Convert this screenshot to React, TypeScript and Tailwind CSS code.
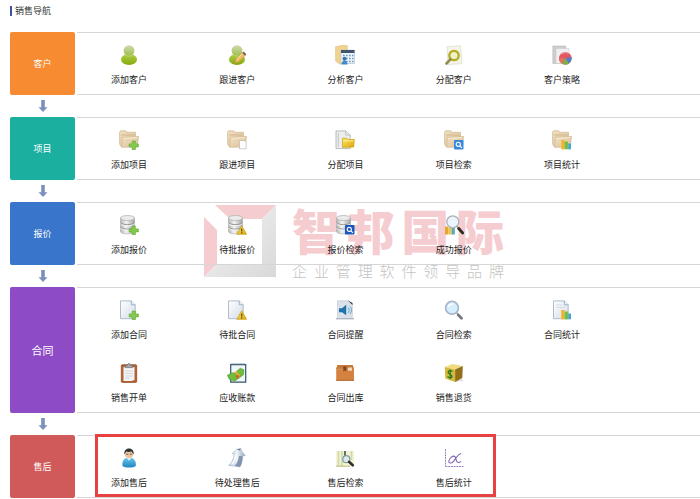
import type { ReactNode } from "react";
import clsx from "clsx";

type NavItem = { label: string; icon: ReactNode };

type Stage = {
    name: string;
    color: string;
    large?: boolean;
    highlighted?: boolean;
    items: NavItem[];
};

function Icon({ children }: { children: ReactNode }) {
    return (
        <svg viewBox="0 0 20 20" className="size-5" aria-hidden="true">
            {children}
        </svg>
    );
}

// Gradients shared by every icon on the page
function IconDefs() {
    return (
        <svg className="absolute size-0" aria-hidden="true">
            <defs>
                <linearGradient id="head" x2="0" y2="1">
                    <stop offset="0" stopColor="#cfdcae" />
                    <stop offset="1" stopColor="#9fbd4c" />
                </linearGradient>
                <linearGradient id="body" x2="0" y2="1">
                    <stop offset="0" stopColor="#b3cf4a" />
                    <stop offset="1" stopColor="#84a90c" />
                </linearGradient>
                <linearGradient id="folder" x2="1" y2="1">
                    <stop offset="0" stopColor="#f1dfc0" />
                    <stop offset="1" stopColor="#dcc299" />
                </linearGradient>
                <linearGradient id="paper" x2="1" y2="1">
                    <stop offset="0" stopColor="#ffffff" />
                    <stop offset="1" stopColor="#d3dce6" />
                </linearGradient>
                <linearGradient id="disk">
                    <stop offset="0" stopColor="#b4b4b4" />
                    <stop offset="0.4" stopColor="#f4f4f4" />
                    <stop offset="1" stopColor="#a2a2a2" />
                </linearGradient>
                <linearGradient id="gold" x2="1" y2="1">
                    <stop offset="0" stopColor="#fbe667" />
                    <stop offset="1" stopColor="#dda60c" />
                </linearGradient>
                <linearGradient id="shirt" x2="0" y2="1">
                    <stop offset="0" stopColor="#6cc8ec" />
                    <stop offset="1" stopColor="#1f86bf" />
                </linearGradient>
                <linearGradient id="slate" x2="1" y2="0">
                    <stop offset="0" stopColor="#9fb2ca" />
                    <stop offset="0.5" stopColor="#f1f5fa" />
                    <stop offset="1" stopColor="#8a9db8" />
                </linearGradient>
                <linearGradient id="frame" x2="1" y2="1">
                    <stop offset="0" stopColor="#f4f4f4" />
                    <stop offset="1" stopColor="#d9d9d9" />
                </linearGradient>
            </defs>
        </svg>
    );
}

function Person() {
    return (
        <>
            <ellipse cx="10" cy="14.4" rx="8" ry="5.600" fill="url(#body)" />
            <circle cx="10" cy="5.6" r="5.4" fill="url(#head)" />
            <path d="M5.5 9.800c2.5 1.700 6.500 1.700 9 0" fill="none" stroke="#c9dc84" strokeWidth="0.600" />
        </>
    );
}

function Folder() {
    return (
        <>
            <path d="M.6 2.200 1.500.8h5.200l1.200 1.500h8.600v12L2 16.500.6 14z" fill="url(#folder)" stroke="#cfb68f" strokeWidth=".7" />
            <path d="M2.400 5h13.300" stroke="#d0b58c" />
            <path d="M3.200 7.400 19.500 6.500l-1.300 10.400-15.600.4z" fill="url(#folder)" stroke="#cfb68f" strokeWidth=".7" />
            <path d="m4 8.400 14-.8" stroke="#f9edd5" />
        </>
    );
}

function Database() {
    return (
        <>
            <path d="M1.500 3v13.500c0 3.200 14 3.200 14 0V3z" fill="url(#disk)" stroke="#a8a8a8" strokeWidth=".6" />
            <ellipse cx="8.500" cy="3" rx="7" ry="2.500" fill="#ececec" stroke="#adadad" strokeWidth=".7" />
            <path d="M1.500 7.500c1 2.800 13 2.800 14 0M1.500 12c1 2.800 13 2.800 14 0" fill="none" stroke="#979797" />
            <path d="M1.500 8.600c1 2.800 13 2.800 14 0M1.500 13.100c1 2.800 13 2.800 14 0" fill="none" stroke="#f7f7f7" strokeWidth=".8" />
        </>
    );
}

function Page() {
    return (
        <>
            <path d="M1.500.9h10.800l3.900 3.900v13.900H1.500z" fill="url(#paper)" stroke="#a5b6c8" strokeWidth=".9" />
            <path d="M12.300.9v3.900h3.900" fill="#e9f1f8" stroke="#8aa3bc" strokeWidth=".8" />
        </>
    );
}

function PlusBadge() {
    return <path d="M13.200 11h3.200v2.900h3v3h-3v2.800h-3.200v-2.800h-3v-3h3z" fill="#84ca4d" stroke="#5eaa2d" strokeWidth=".6" />;
}

function WarningBadge() {
    return (
        <>
            <path d="M14.700 10.800 19.600 19.300H9.800z" fill="url(#gold)" stroke="#cf9c10" strokeWidth=".7" strokeLinejoin="round" />
            <path d="M14.700 13.400v3M14.700 17.200v1.200" stroke="#5f4700" strokeWidth="1.200" />
        </>
    );
}

function SearchBadge({ fill }: { fill: string }) {
    return (
        <>
            <rect x="10" y="10" width="9.500" height="9.500" rx=".8" fill={fill} />
            <circle cx="14.300" cy="14.300" r="2.100" fill="none" stroke="#fff" strokeWidth="1.100" />
            <path d="m15.900 15.900 2 2" stroke="#fff" strokeWidth="1.100" />
        </>
    );
}

function BarsBadge() {
    return (
        <>
            <path d="M9 10h3.500v9.300H9z" fill="#f0b22f" />
            <path d="M12.500 11.500h3.300v7.800h-3.300z" fill="#6fba35" />
            <path d="M15.800 13.500h3.200v5.800h-3.200z" fill="#47a5c8" />
            <path d="M9.500 10v9.300M13 11.500v7.800M16.300 13.500v5.800" stroke="#fff" strokeOpacity=".3" strokeWidth=".6" />
        </>
    );
}

const stages: Stage[] = [
    {
        name: "客户",
        color: "bg-[#f68b32]",
        items: [
            { label: "添加客户", icon: <Person /> },
            {
                label: "跟进客户",
                icon: (
                    <>
                        <Person />
                        <path d="m8 18 1-4.200 6.800-6.200 2.600 2.600-6.700 6.600z" fill="#f1bf66" stroke="#c28a3b" strokeWidth=".6" />
                        <path d="m15.200 8 1.400-1.500 2.800 2.700-1.400 1.500z" fill="#7c6555" />
                        <path d="m9.600 14 6-5.400" stroke="#fbe3a3" />
                    </>
                ),
            },
            {
                label: "分析客户",
                icon: (
                    <>
                        <path d="M.6 1.500h3L4.500.6h7.800v15.800L5 19.300.6 16z" fill="#f1d391" stroke="#dbb56b" strokeWidth=".5" />
                        <path d="M6 5.200h13.500v13.300H6z" fill="#eef4fa" stroke="#a8b8c9" strokeWidth=".6" />
                        <path d="M6 5h13.500v3H6z" fill="#40546f" />
                        <path d="M8 10.500h10.500M8 13.500h10.500M8 16.500h10.500" stroke="#6a99c4" strokeWidth="1.300" strokeDasharray="1.700 1.300" />
                        <circle cx="9.500" cy="13.700" r="2" fill="#3872ad" />
                        <path d="M6.500 19.500c0-5 6-5 6 0z" fill="#3f88c9" />
                    </>
                ),
            },
            {
                label: "分配客户",
                icon: (
                    <>
                        <path d="M3 1.500 16.500.7l1.500 18L4 19.500z" fill="#f4f3e8" stroke="#deddcd" strokeWidth=".7" />
                        <circle cx="10" cy="10.500" r="4.700" fill="#edf2c7" stroke="#b4ac27" strokeWidth="2.300" />
                        <path d="m6.500 14.200-4 4.300" stroke="#918c4e" strokeWidth="2.600" strokeLinecap="round" />
                    </>
                ),
            },
            {
                label: "客户策略",
                icon: (
                    <>
                        <path d="M.8 1h13v17.500H.8z" fill="#ceccce" stroke="#bcbabc" strokeWidth=".6" />
                        <path d="M4 3.500h13v15H4z" fill="#f0eff1" stroke="#cbc9cc" strokeWidth=".6" />
                        <circle cx="13.300" cy="13.300" r="6.300" fill="#e35760" />
                        <path d="M13.300 13.300 19.500 12a6.300 6.300 0 0 1-2.500 6.400z" fill="#507fc8" />
                        <path d="m13.300 13.300 3.700 5.100a6.300 6.300 0 0 1-6.700.4z" fill="#74b44c" />
                        <path d="m13.300 13.300-3 5.500A6.300 6.300 0 0 1 7 13.500z" fill="#e0765a" />
                        <path d="M9.500 9.400c2-2.200 5-2.300 7-.8" fill="none" stroke="#f29b9f" />
                    </>
                ),
            },
        ],
    },
    {
        name: "项目",
        color: "bg-[#1aaf9f]",
        items: [
            { label: "添加项目", icon: <><Folder /><PlusBadge /></> },
            {
                label: "跟进项目",
                icon: (
                    <>
                        <Folder />
                        <path d="M12.500 10.500h4.700l2 2v6.300h-6.700z" fill="#fdfdfd" stroke="#bdb8b0" strokeWidth=".7" />
                    </>
                ),
            },
            {
                label: "分配项目",
                icon: (
                    <>
                        <path d="M1 .9h9.500l4.700 4.200v13.500H1z" fill="#eceeed" stroke="#a9adab" strokeWidth=".8" />
                        <path d="M10.500.9v4.200h4.700M3.300 3v14" fill="none" stroke="#b9bdbb" strokeWidth=".8" />
                        <path d="M7.500 8.300h4.300l1.200 1.200h6.300l-.6 7.500-11.200.4z" fill="url(#gold)" stroke="#cfa20b" strokeWidth=".7" />
                        <path d="M8.300 10.900h10" stroke="#fff0a0" />
                    </>
                ),
            },
            { label: "项目检索", icon: <><Folder /><SearchBadge fill="#3888dc" /></> },
            { label: "项目统计", icon: <><Folder /><BarsBadge /></> },
        ],
    },
    {
        name: "报价",
        color: "bg-[#3875cb]",
        items: [
            { label: "添加报价", icon: <><Database /><PlusBadge /></> },
            { label: "待批报价", icon: <><Database /><WarningBadge /></> },
            { label: "报价检索", icon: <><Database /><SearchBadge fill="#1c57bd" /></> },
            {
                label: "成功报价",
                icon: (
                    <>
                        <path d="M1 11.500h3.300v8H1z" fill="#e7a62c" />
                        <path d="M4.300 12.500h3.300v7H4.300z" fill="#f0c24a" />
                        <path d="M7.600 13h3.200v6.500H7.600z" fill="#51aabf" />
                        <circle cx="8.800" cy="6.800" r="6" fill="#e8f2f9" fillOpacity=".85" stroke="#a9b1b8" strokeWidth="1.300" />
                        <path d="m13 11.300 2 2" stroke="#999" strokeWidth="1.500" />
                        <path d="m14.700 13.500 4 4.500" stroke="#302b2a" strokeWidth="2.800" strokeLinecap="round" />
                    </>
                ),
            },
        ],
    },
    {
        name: "合同",
        color: "bg-[#8d4bc5]",
        large: true,
        items: [
            { label: "添加合同", icon: <><Page /><PlusBadge /></> },
            { label: "待批合同", icon: <><Page /><WarningBadge /></> },
            {
                label: "合同提醒",
                icon: (
                    <>
                        <path d="M2.500.8h11l3.800 3.700v14H2.500z" fill="#dbe1e8" stroke="#bac4cf" strokeWidth=".6" />
                        <path d="M13 .5 17.500 5v-2z" fill="#2a3038" />
                        <path d="M1 18.700h18" stroke="#aeb8c5" strokeWidth="1.400" />
                        <path d="M4 8.300h3l4.200-3.500v10.500L7 12.200H4z" fill="#1d74ad" />
                        <path d="M13 7.500c1.500 1.700 1.500 3.700 0 5.400M15 6.500c2 2.300 2 5.100 0 7.400" fill="none" stroke="#58a7cc" />
                    </>
                ),
            },
            {
                label: "合同检索",
                icon: (
                    <>
                        <circle cx="8" cy="7.800" r="6.400" fill="#d7eefb" stroke="#a7b7cc" strokeWidth="1.700" />
                        <path d="M4.500 7c.4-2.500 2.500-3.600 5-3" fill="none" stroke="#fff" strokeWidth="1.300" />
                        <path d="m12.700 12.900 2 2" stroke="#a6a6aa" strokeWidth="1.600" />
                        <path d="m14.300 15 3.200 3.200" stroke="#78777d" strokeWidth="2.800" strokeLinecap="round" />
                    </>
                ),
            },
            { label: "合同统计", icon: <><Page /><path d="M4 5h6M4 7.500h9" stroke="#d4dce5" /><BarsBadge /></> },
            {
                label: "销售开单",
                icon: (
                    <>
                        <rect x="2.300" y="1.700" width="15.400" height="17.700" rx="1" fill="#b76030" stroke="#8c4220" strokeWidth=".7" />
                        <path d="M4.500 4h11v13l-3 1H4.500z" fill="#f3f4f6" />
                        <path d="M6.300 8h7.400M6.300 10.500h7.400M6.300 13h7.400M6.300 15.300h4" stroke="#c8cdd3" strokeWidth=".8" />
                        <path d="M6 4.600V2.500h2.300C8.500-.1 11.500-.1 11.700 2.500H14v2.100z" fill="#a3a8ac" stroke="#686c70" strokeWidth=".7" />
                    </>
                ),
            },
            {
                label: "应收账款",
                icon: (
                    <>
                        <path d="M3.700 1.700h15v17.400h-15z" fill="#f2f7fa" stroke="#345468" strokeWidth="1.200" />
                        <path d="M4.500 1.200h14" stroke="#617f91" strokeWidth="1.800" strokeDasharray="1 1" />
                        <path d="m.4 12.300 4.500-2.500 2.500.5 5.800-5.100 3.700 1.600-.4 5-8.600 6.300-5.600-1.800z" fill="#6fbe3b" stroke="#4b962d" strokeWidth=".6" />
                        <path d="m6 9.500 3 1 2 4 2-2-3-4z" fill="#ecad36" />
                        <path d="m8.500 13 2.500-1.500 1 2.500-2 1.700z" fill="#d9582f" />
                    </>
                ),
            },
            {
                label: "合同出库",
                icon: (
                    <>
                        <path d="M2.500 2h15l1.500 4v11.500H1.200V6z" fill="#d58240" />
                        <path d="M2.500 2h15l1.500 4H1.200z" fill="#c57838" />
                        <path d="M1.200 6.200H19" stroke="#dd955a" strokeWidth=".8" />
                        <path d="M8.300 3.500h3v5l-1.500-1-1.500 1z" fill="#754723" />
                        <path d="M13 4.500h4v3.200h-4z" fill="#f0d8bd" />
                        <path d="M1.200 17.300H19" stroke="#b2632c" />
                    </>
                ),
            },
            {
                label: "销售退货",
                icon: (
                    <>
                        <path d="m11 17.800 7-1.500 2 1.200-8 1.500z" fill="#ddd" />
                        <path d="m.8 4 7.700-3 10.300 2-7.700 3.500z" fill="#f0dc80" />
                        <path d="m.8 4 10.300 2.500V19L1.300 15.500z" fill="#d7b83a" />
                        <path d="m11.100 6.500 7.700-3.500-.5 12L11.100 19z" fill="#927019" />
                        <path d="M8.500 8.600C5.800 6.500 3.300 8.300 4.500 10.200c.8 1.200 3.800 1.400 3.600 3.500-.2 1.700-3 1.600-4.600-.3M6.200 6.500v9.800" fill="none" stroke="#287b20" strokeWidth="1.300" />
                    </>
                ),
            },
        ],
    },
    {
        name: "售后",
        color: "bg-[#d05a5a]",
        highlighted: true,
        items: [
            {
                label: "添加售后",
                icon: (
                    <>
                        <path d="M3.500 18C2.800 12.500 5.500 9.500 10 9.500s7.500 3 6.800 8.500c-2.500 2-10.800 2-13.300 0z" fill="url(#shirt)" />
                        <path d="m7.500 9.700 2.500 3 2.500-3z" fill="#e9f7fd" />
                        <circle cx="10" cy="5.900" r="4.300" fill="#eec5a0" />
                        <path d="M5.400 6.300C4.300-1.400 15.700-1.400 14.600 6.300c-1-.5-1.200-2.200-2.200-2.800-2 .6-4.200.4-5.300 0-.7 1-.8 2.300-1.700 2.800z" fill="#2e3134" />
                        <path d="M7.300 6.200h2M10.900 6.200h2" stroke="#55443a" strokeWidth=".8" />
                    </>
                ),
            },
            {
                label: "待处理售后",
                icon: (
                    <>
                        <path d="M5 5.500 9.500 1.300l4.500-.8 1.200 3.300 3.300 3.700-2.800.7c-.3 4-.7 7.500-2.700 10.800L1.500 17.500C5 14.500 6.500 11 7 6.500z" fill="url(#slate)" stroke="#b3bfd0" strokeWidth=".5" />
                        <path d="M12 8c-.5 4-2 7.500-4.500 10l5.500 1c2-3.300 2.400-6.800 2.700-10.800z" fill="#8193ad" />
                        <path d="M9 6.500c-.5 4-2 7.500-4.500 10" fill="none" stroke="#fff" strokeWidth="1.500" />
                        <path d="m9.500 1.300 3 1.200L14 .5z" fill="#667e9e" />
                    </>
                ),
            },
            {
                label: "售后检索",
                icon: (
                    <>
                        <path d="M1 3h18v15H1z" fill="#f4f4d0" />
                        <path d="M3.500 3v15M7 3v15M16.500 3v9" stroke="#cdd8ae" strokeWidth="1.600" />
                        <path d="M9 3h2v6H9z" fill="#5f716c" />
                        <circle cx="11.300" cy="11.200" r="3.500" fill="#dce9ed" stroke="#879ba0" strokeWidth="1.200" />
                        <path d="m14 13.800 3.800 3.500" stroke="#302f2f" strokeWidth="2.600" strokeLinecap="round" />
                        <path d="M1 18.200h14" stroke="#bbb97b" />
                    </>
                ),
            },
            {
                label: "售后统计",
                icon: (
                    <>
                        <path d="M1.500 1v17.500M1.500 18.500h18" fill="none" stroke="#9b82bd" strokeDasharray="2 .7" />
                        <path d="M17 5.500c-3 .5-5 5-7.500 7.800-2 2.200-4.700 2.400-4.700.2 0-3 4.200-6.500 6-5 1.700 1.500 1 5.700 3.200 6 1.200.2 2.200-.4 3-1" fill="none" stroke="#8068ad" strokeWidth="1.100" />
                    </>
                ),
            },
        ],
    },
];

function Watermark() {
    return (
        <div className="pointer-events-none absolute left-[204px] top-[205px] flex gap-4 select-none">
            <svg viewBox="0 0 72 72" className="size-[72px]" aria-hidden="true">
                <path d="M11 0h61L58 14H26z" fill="#f5cccf" />
                <path d="M0 12l13 13v34L0 72z" fill="#f5cccf" />
                <path d="M72 0v72H0l13-13h45V14z" fill="url(#frame)" />
            </svg>
            <div className="w-[212px]">
                <p className="flex justify-between text-[48px] leading-[48px] font-black text-[#f5cccf]">
                    {[..."智邦国际"].map((char) => <span key={char}>{char}</span>)}
                </p>
                <p className="mt-2.5 flex justify-between text-[15px] leading-4 font-light text-[#c4c4c4]">
                    {[..."企业管理软件领导品牌"].map((char) => <span key={char}>{char}</span>)}
                </p>
            </div>
        </div>
    );
}

function DownArrow() {
    return (
        <div className="flex h-[22px] w-[65px] items-center justify-center">
            <svg viewBox="0 0 10 12" className="h-3 w-2.5" aria-hidden="true">
                <path d="M3.200 0h3.600v7.300h2.700L5 12 .5 7.300h2.700z" fill="#7b90bd" />
            </svg>
        </div>
    );
}

function StageRow({ stage }: { stage: Stage }) {
    return (
        <section className="flex gap-0.5">
            <h2
                className={clsx(
                    "flex w-[65px] shrink-0 items-center justify-center rounded-xs text-white",
                    stage.color,
                    stage.large ? "text-[11px]" : "text-[9px]",
                )}
            >
                {stage.name}
            </h2>

            <div className="relative min-w-0 flex-1 border-y border-[#d6d6d6]">
                <ul className="grid w-full max-w-[541px] grid-cols-5 gap-y-0.5">
                    {stage.items.map((item) => (
                        <li key={item.label}>
                            <a href="#" className="flex flex-col items-center gap-2 pt-3 pr-1 pb-[7px]">
                                <Icon>{item.icon}</Icon>
                                <span className="text-[9px] leading-[14px] whitespace-nowrap">{item.label}</span>
                            </a>
                        </li>
                    ))}
                </ul>

                {stage.highlighted && (
                    <div className="pointer-events-none absolute -top-0.5 bottom-0 left-[18px] w-[401px] border-3 border-[#e84141]" />
                )}
            </div>
        </section>
    );
}

export default function App() {
    return (
        <main className="relative bg-white pl-[10px] font-['Noto_Sans_CJK_SC',sans-serif] text-[#222]">
            <IconDefs />
            <Watermark />

            <div className="relative">
                <header className="flex h-8 items-start pt-1">
                    <h1 className="flex items-center gap-[3px] text-[9px] leading-[14px] text-[#333]">
                        <span className="h-2.5 w-0.5 bg-[#3d539c]" />
                        销售导航
                    </h1>
                </header>

                {stages.map((stage, index) => (
                    <div key={stage.name}>
                        {index > 0 && <DownArrow />}
                        <StageRow stage={stage} />
                    </div>
                ))}
            </div>
        </main>
    );
}
